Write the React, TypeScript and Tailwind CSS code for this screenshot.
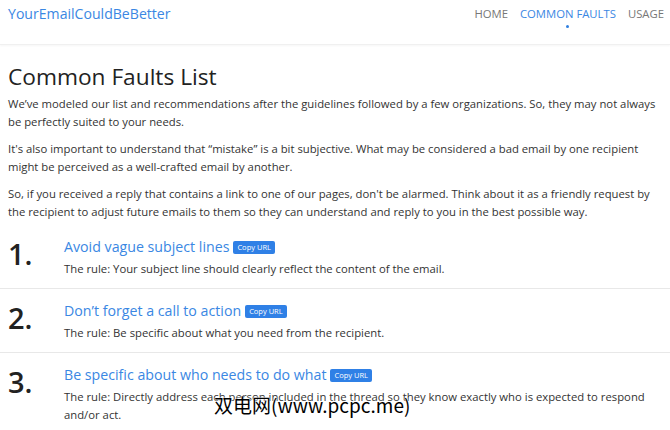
const NAV = [
  { label: "HOME", active: false },
  { label: "COMMON FAULTS", active: true },
  { label: "USAGE", active: false },
];

const FAULTS = [
  {
    title: "Avoid vague subject lines",
    rule: "The rule: Your subject line should clearly reflect the content of the email.",
  },
  {
    title: "Don\u2019t forget a call to action",
    rule: "The rule: Be specific about what you need from the recipient.",
  },
  {
    title: "Be specific about who needs to do what",
    rule: "The rule: Directly address each person included in the thread so they know exactly who is expected to respond and/or act.",
  },
];

export default function App() {
  return (
    <div className="relative h-[430px] overflow-hidden bg-white font-['Open_Sans','Noto_Sans',sans-serif] text-[#333]">
      {/* Top bar */}
      <header className="flex h-[45px] items-start justify-between border-b border-[#f0f0f0] pl-2 pr-[6px] pt-[4px] shadow-[0_1px_2px_rgba(0,0,0,0.04)]">
        <a className="text-[14.1px] leading-[20px] text-[#3a87e3]">YourEmailCouldBeBetter</a>
        <nav className="flex gap-3 pt-[2px]">
          {NAV.map((n) => (
            <div key={n.label} className="flex flex-col items-center">
              <span
                className={`text-[11.3px] leading-[16px] ${
                  n.active ? "text-[#3a87e3]" : "text-[#777]"
                }`}
              >
                {n.label}
              </span>
              {n.active && <span className="mt-[3px] h-[3px] w-[3px] rounded-full bg-[#2f7fe0]" />}
            </div>
          ))}
        </nav>
      </header>

      <main className="px-2 pt-[16px]">
        <h1 className="text-[22.7px] leading-[32px] text-[#222]">Common Faults List</h1>
        <div className="mt-[2px] flex flex-col gap-[9px] text-[11.3px] leading-[18px] text-[#333]">
          <p>
            We’ve modeled our list and recommendations after the guidelines followed by a few organizations.
            So, they may not always be perfectly suited to your needs.
          </p>
          <p>
            It's also important to understand that “mistake” is a bit subjective. What may be considered a bad
            email by one recipient might be perceived as a well-crafted email by another.
          </p>
          <p>
            So, if you received a reply that contains a link to one of our pages, don't be alarmed. Think about
            it as a friendly request by the recipient to adjust future emails to them so they can understand and
            reply to you in the best possible way.
          </p>
        </div>

        <ol className="mt-[4px]">
          {FAULTS.map((f, i) => (
            <li
              key={f.title}
              className="-mx-2 flex border-b border-[#e8e8e8] px-2 pb-[10px] pt-[9px] last:border-b-0"
            >
              <div className="w-[56px] shrink-0 pt-[2px] text-[29px] leading-[36px] font-semibold text-[#222]">
                {i + 1}.
              </div>
              <div className="flex-1">
                <div className="flex items-center text-[14.2px] leading-[26px] text-[#3a87e3]">
                  <span>{f.title}</span>
                  <button className="ml-[4px] rounded-[2px] bg-[#2f80e6] px-[4px] text-[7.5px] leading-[13px] text-white">
                    Copy URL
                  </button>
                </div>
                <p className="text-[11.3px] leading-[18px] text-[#333]">{f.rule}</p>
              </div>
            </li>
          ))}
        </ol>
      </main>

      {/* watermark */}
      <div className="pointer-events-none absolute left-[214px] top-[393px] font-['Noto_Sans_CJK_SC','DejaVu_Sans',sans-serif] text-[19px] leading-[24px] text-black [text-shadow:0_0_2px_#fff,0_0_2px_#fff]">
        双电网(www.pcpc.me)
      </div>
    </div>
  );
}
